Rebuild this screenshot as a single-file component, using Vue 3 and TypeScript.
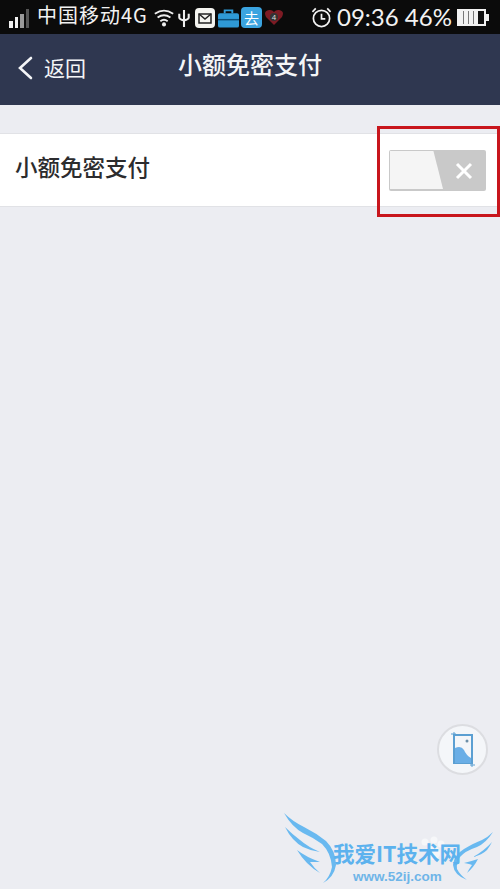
<script setup lang="ts">
const bars: number[] = [7, 11, 14, 19];
</script>

<template>
  <div class="page">
    <header class="status">
      <div class="signal">
        <i v-for="(h, n) in bars" :key="n" :class="'bar-' + n" :style="{ height: h + 'px' }"></i>
      </div>
      <span class="carrier">中国移动4G</span>
      <svg class="wifi" viewBox="0 0 24 20" width="22" height="19">
        <path d="M2 6 Q12 -1 22 6M5 10 Q12 5 19 10M8 14 Q12 11 16 14" fill="none" stroke="#eee" stroke-width="2" />
        <circle cx="12" cy="17.5" r="2.2" fill="#eee" />
      </svg>
      <svg class="usb" viewBox="0 0 14 18" width="14" height="17">
        <path d="M7 0V18M2 4V8Q2 10 7 11Q12 10 12 8V4" fill="none" stroke="#eee" stroke-width="2.200" />
      </svg>
      <svg class="mail" viewBox="0 0 20 20" width="20" height="20">
        <rect width="20" height="20" rx="4" fill="#f4f4f0" />
        <rect x="4" y="6" width="12" height="9" fill="none" stroke="#222" stroke-width="1.500" />
        <path d="M4 6L10 11L16 6" fill="none" stroke="#222" stroke-width="1.500" />
      </svg>
      <svg class="case" viewBox="0 0 22 20" width="21" height="20">
        <path d="M7 5V2H15V5" fill="none" stroke="#2f9ad6" stroke-width="2" />
        <rect y="5" width="22" height="15" rx="2" fill="#2f9ad6" />
        <rect y="11" width="22" height="1.500" fill="#0d4f78" />
      </svg>
      <div class="app-blue">去</div>
      <svg class="heart" viewBox="0 0 20 18" width="20" height="18">
        <path d="M10 17L2 9Q-1 3 5 2Q8 1.500 10 4Q12 1.500 15 2Q21 3 18 9Z" fill="#7d1b24" />
        <circle cx="10" cy="9" r="4" fill="#333" />
        <text x="10" y="12" class="heart-num">4</text>
      </svg>
      <svg class="clock" viewBox="0 0 22 22" width="21" height="21">
        <circle cx="11" cy="12" r="8.500" fill="none" stroke="#f2f2f2" stroke-width="1.800" />
        <path d="M11 7V12.500H15M1.500 5L5 1.500M20.500 5L17 1.500" fill="none" stroke="#f2f2f2" stroke-width="1.800" />
      </svg>
      <span class="time">09:36 46%</span>
      <div class="battery">
        <div class="battery-fill"></div>
        <i class="battery-tip"></i>
      </div>
    </header>

    <nav class="navbar">
      <div class="back">
        <svg viewBox="0 0 16 24" width="16" height="24">
          <path d="M14 2L3 12L14 22" fill="none" stroke="#f4f5f7" stroke-width="2.600" stroke-linecap="round" />
        </svg>
        <span class="back-text">返回</span>
      </div>
      <h1 class="title">小额免密支付</h1>
    </nav>

    <section class="row">
      <span class="label">小额免密支付</span>
      <div class="toggle">
        <div class="knob"></div>
        <svg class="cross" viewBox="0 0 18 18" width="18" height="18">
          <path d="M2 2L16 16M16 2L2 16" stroke="#fff" stroke-width="3" />
        </svg>
      </div>
    </section>

    <div class="red-box"></div>

    <button class="float-btn" type="button" aria-label="截图">
      <svg viewBox="0 0 24 35" width="24" height="35">
        <path d="M3 3H21V31H3Z" fill="none" stroke="#5b9fd2" stroke-width="2" />
        <path d="M0 2H5M3 0V5M19 33H24M21 30V35" fill="none" stroke="#5b9fd2" stroke-width="1" />
        <circle cx="16" cy="9" r="1.500" fill="#6d8fa8" />
        <path d="M4 31V16Q10 13 13 18Q15 23 20 26V31Z" fill="#6aaee6" />
      </svg>
    </button>

    <div class="watermark">
      <svg class="wings" viewBox="0 0 216 76" width="216" height="76">
        <circle cx="141" cy="29" r="3.500" fill="#f6f7f9" />
        <circle cx="150" cy="27" r="3.500" fill="#f6f7f9" />
        <circle cx="157" cy="31" r="3.500" fill="#f6f7f9" />
        <circle cx="149" cy="40" r="7" fill="#f6f7f9" />
        <path d="M0 0Q8 14 19 20Q30 25 38 31Q47 40 48 54Q46 64 39 70Q50 64 52 52Q52 38 42 28Q32 20 20 14Q8 8 0 0Z" fill="#69b9f0" />
        <path d="M1 14Q8 28 19 34Q27 38 36 39Q24 34 16 27Q8 21 1 14Z" fill="#69b9f0" />
        <path d="M13 37Q22 44 36 49L26 49Q30 55 36 60Q22 52 13 37Z" fill="#69b9f0" />
        <path d="M209 19Q202 30 193 34Q181 38 176 44Q172 50 173 56Q176 62 183 67Q170 62 169 52Q170 42 180 36Q190 30 198 27Q204 24 209 19Z" fill="#69b9f0" />
        <path d="M208 29Q200 38 189 44Q198 42 203 37Q206 33 208 29Z" fill="#69b9f0" />
        <path d="M194 46Q188 48 180 50Q186 51 188 52Q185 56 183 60Q190 54 194 46Z" fill="#69b9f0" />
      </svg>
      <div class="wm-title">我爱IT技术网</div>
      <div class="wm-url">www.52ij.com</div>
    </div>
  </div>
</template>

<style scoped>
.page {
  position: relative;
  width: 500px;
  height: 889px;
  overflow: hidden;
  background: #ecedf2;
  font-family: "Noto Sans CJK SC", "Liberation Sans", sans-serif;
}
.status {
  height: 34px;
  display: flex;
  align-items: center;
  padding-left: 9px;
  background: #0b0b0b;
  color: #f2f2f2;
}
.signal {
  width: 21px;
  height: 19px;
  margin-top: 2px;
  display: flex;
  align-items: flex-end;
  gap: 2px;
}
.signal i {
  width: 3.500px;
  background: #f2f2f2;
}
.signal i.bar-2 {
  background: #9a9a9a;
}
.signal i.bar-3 {
  background: #555;
}
.carrier {
  margin: -5px 0 0 7px;
  width: 113px;
  height: 24px;
  font-size: 20px;
  line-height: 24px;
  letter-spacing: 1px;
  white-space: nowrap;
}
.wifi {
  margin-left: 3px;
  margin-top: 1px;
}
.usb {
  margin-left: 2px;
  margin-top: 3px;
}
.mail {
  margin-left: 4px;
  margin-top: 1px;
}
.case {
  margin-left: 3px;
  margin-top: 1px;
}
.app-blue {
  width: 21px;
  height: 21px;
  margin-left: 2px;
  border-radius: 4px;
  background: #3ba4e0;
  color: #fff;
  font-size: 15px;
  line-height: 21px;
  text-align: center;
}
.heart {
  margin-left: 2px;
}
.heart-num {
  fill: #ddd;
  font-size: 8px;
  text-anchor: middle;
  font-family: "Liberation Sans", sans-serif;
}
.clock {
  margin-left: 27px;
}
.time {
  margin-left: 5px;
  width: 120px;
  font-family: "Lato", "Liberation Sans", sans-serif;
  font-size: 24px;
  line-height: 26px;
  white-space: nowrap;
}
.battery {
  position: relative;
  width: 29px;
  height: 17px;
  box-sizing: border-box;
  border: 2px solid #f2f2f2;
  background: #111;
}
.battery-fill {
  width: 19px;
  height: 100%;
  background: repeating-linear-gradient(90deg, #f2f2f2 0 4px, #777 4px 5px);
}
.battery-tip {
  position: absolute;
  right: -5px;
  top: 3px;
  width: 3px;
  height: 7px;
  background: #f2f2f2;
}
.navbar {
  position: relative;
  height: 71px;
  display: flex;
  align-items: center;
  justify-content: center;
  background: #2f3750;
  color: #f4f5f7;
}
.back {
  position: absolute;
  left: 17px;
  top: 22px;
  display: flex;
  align-items: center;
  gap: 11px;
  font-size: 21px;
  line-height: 26px;
}
.back-text {
  margin-top: -2px;
}
.title {
  margin: -11px 0 0 0;
  font-size: 24px;
  font-weight: 500;
  line-height: 30px;
}
.row {
  margin-top: 28px;
  height: 74px;
  box-sizing: border-box;
  display: flex;
  align-items: center;
  justify-content: space-between;
  padding: 0 14px 0 15px;
  background: #fff;
  border-top: 1px solid #e1e2e6;
  border-bottom: 1px solid #e1e2e6;
}
.label {
  margin-top: -9px;
  font-size: 22.500px;
  font-weight: 500;
  line-height: 30px;
  color: #2c2c2e;
}
.toggle {
  position: relative;
  width: 97px;
  height: 41px;
  margin-top: 1px;
  border-radius: 2px;
  background: #c9c9c9;
  overflow: hidden;
}
.knob {
  position: absolute;
  left: 1px;
  top: 1px;
  bottom: 2px;
  width: 53px;
  background: #f5f5f5;
  clip-path: polygon(0 0, 82% 0, 100% 100%, 0 100%);
}
.cross {
  position: absolute;
  right: 13px;
  top: 12px;
}
.red-box {
  position: absolute;
  left: 377px;
  top: 126px;
  width: 123px;
  height: 91px;
  box-sizing: border-box;
  border: 3px solid #c8161d;
}
.float-btn {
  position: absolute;
  left: 437px;
  top: 724px;
  width: 51px;
  height: 51px;
  padding: 0;
  display: flex;
  align-items: center;
  justify-content: center;
  box-sizing: border-box;
  border: 2px solid #dcdde1;
  border-radius: 50%;
  background: #f4f6f9;
}
.watermark {
  position: absolute;
  left: 284px;
  top: 813px;
  width: 216px;
  height: 76px;
}
.wings {
  position: absolute;
  left: 0;
  top: 0;
}
.wm-title {
  position: absolute;
  left: 49px;
  top: 27px;
  font-size: 21.500px;
  line-height: 26px;
  font-weight: 700;
  color: #5cb2ee;
  white-space: nowrap;
}
.wm-url {
  position: absolute;
  left: 69px;
  top: 57px;
  font-family: "Liberation Sans", sans-serif;
  font-size: 13.500px;
  font-weight: 700;
  line-height: 14px;
  color: #6fb5e8;
  white-space: nowrap;
}
</style>
